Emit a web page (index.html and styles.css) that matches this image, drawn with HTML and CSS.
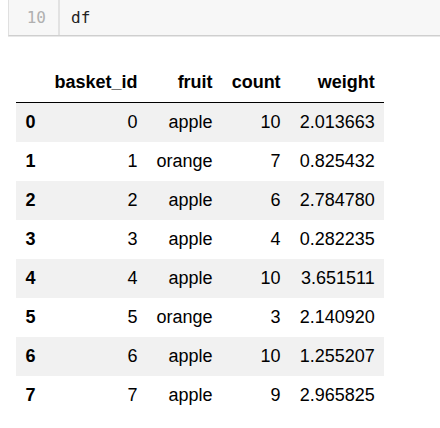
FILE: index.html
```html
<!DOCTYPE html>
<html>
<head>
<meta charset="utf-8">
<link rel="stylesheet" href="styles.css">
</head>
<body>
<div class="cell">
  <div class="gutter">10</div>
  <div class="code">df</div>
</div>
<div class="output">
<table class="df">
  <thead>
    <tr><th class="blank"></th><th>basket_id</th><th>fruit</th><th>count</th><th>weight</th></tr>
  </thead>
  <tbody>
    <tr class="even"><th>0</th><td>0</td><td>apple</td><td>10</td><td>2.013663</td></tr>
    <tr><th>1</th><td>1</td><td>orange</td><td>7</td><td>0.825432</td></tr>
    <tr class="even"><th>2</th><td>2</td><td>apple</td><td>6</td><td>2.784780</td></tr>
    <tr><th>3</th><td>3</td><td>apple</td><td>4</td><td>0.282235</td></tr>
    <tr class="even"><th>4</th><td>4</td><td>apple</td><td>10</td><td>3.651511</td></tr>
    <tr><th>5</th><td>5</td><td>orange</td><td>3</td><td>2.140920</td></tr>
    <tr class="even"><th>6</th><td>6</td><td>apple</td><td>10</td><td>1.255207</td></tr>
    <tr><th>7</th><td>7</td><td>apple</td><td>9</td><td>2.965825</td></tr>
  </tbody>
</table>
</div>
</body>
</html>
```

FILE: styles.css
```css
html, body {
  margin: 0;
  padding: 0;
  background: #ffffff;
}
.cell {
  display: flex;
  margin-left: 8px;
  height: 35px;
  background: #f7f7f7;
  border-left: 1px solid #e0e0e0;
  border-bottom: 1px solid #cfcfcf;
  box-shadow: 0 1px 0 #e8e8e8;
  font-family: "DejaVu Sans Mono", monospace;
  font-size: 16px;
  line-height: 20px;
}
.gutter {
  width: 37px;
  padding-right: 12px;
  text-align: right;
  color: #b0b0b0;
  border-right: 2px solid #e2e2e2;
  padding-top: 8px;
}
.code {
  padding-left: 11px;
  padding-top: 8px;
  color: #222222;
}
.output {
  padding: 27px 0 0 16px;
}
.df {
  border-collapse: collapse;
  border-spacing: 0;
  font-family: "Liberation Sans", Arial, sans-serif;
  font-size: 18px;
  color: #000000;
}
.df th, .df td {
  padding: 9px 9.5px;
  text-align: right;
  vertical-align: middle;
  line-height: 21px;
  white-space: nowrap;
}
.df th {
  font-weight: bold;
}
.df thead th {
  border-bottom: 1px solid #000000;
}
.df tr.even {
  background-color: #f1f1f1;
}
.df tbody th {
  text-align: left;
}
```
